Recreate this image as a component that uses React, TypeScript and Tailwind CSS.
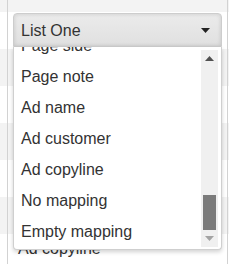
import React from 'react'

const items = ['Page side', 'Page note', 'Ad name', 'Ad customer', 'Ad copyline', 'No mapping', 'Empty mapping']

// background table rows: [height, striped, text]
const rows: [string, boolean, string][] = [
  ['h-[12px]', true, ''],
  ['h-[37px]', false, ''],
  ['h-[37px]', true, ''],
  ['h-[37px]', false, ''],
  ['h-[37px]', true, ''],
  ['h-[37px]', false, ''],
  ['h-[37px]', true, ''],
  ['h-[37px]', false, 'Ad copyline'],
]

function Tri({ up, color }: { up?: boolean; color: string }) {
  return (
    <svg width="9" height="5" viewBox="0 0 9 5">
      <polygon points={up ? '0,5 9,5 4.5,0' : '0,0 9,0 4.5,5'} fill={color} />
    </svg>
  )
}

export default function App() {
  return (
    <div className="relative w-[229px] h-[264px] overflow-hidden bg-white text-[#333] font-['Liberation_Sans',Arial,sans-serif]">

      {/* table behind */}
      <div className="flex flex-col">
        {rows.map(([h, striped, text], i) => (
          <div key={i} className={`flex ${h} ${striped ? 'bg-[#f3f3f3]' : 'bg-white'}`}>
            <div className="w-[7px] shrink-0" />
            <div className="flex-1 border-x border-[#d2d2d2] pl-[10px] pt-[6px] text-[16px] leading-[18px]">{text}</div>
            <div className="w-[1px] shrink-0" />
          </div>
        ))}
      </div>

      {/* open select */}
      <div className="absolute left-[13px] top-[13px] w-[209px]">
        <div className="flex h-[34px] items-center justify-between rounded-t-[4px] border border-[#cdcdcd] bg-gradient-to-b from-[#ebebeb] to-[#e0e0e0] pl-[7px] pr-[11px] pt-[1px] shadow-[inset_0_0_4px_rgba(0,0,0,0.14)]">
          <span className="text-[16px] leading-[18px]">List One</span>
          <Tri color="#222" />
        </div>

        <div className="flex h-[203px] rounded-b-[4px] border border-t-0 border-[#cfcfcf] bg-white shadow-[0_2px_4px_rgba(0,0,0,0.18)]">
          <div className="flex-1 overflow-hidden">
            <div className="-mt-[17px] flex flex-col">
              {items.map(it => (
                <div key={it} className="flex h-[31px] items-center pl-[7px] text-[16px] leading-[18px]">
                  {it}
                </div>
              ))}
            </div>
          </div>

          <div className="mt-[3px] mb-[2px] mr-[3px] flex w-[17px] flex-col bg-[#f0f0f0]">
            <div className="flex h-[17px] items-center justify-center">
              <Tri up color="#505050" />
            </div>
            <div className="flex flex-1 flex-col justify-end">
              <div className="mx-[2px] h-[35px] bg-[#7b7b7b]" />
            </div>
            <div className="flex h-[17px] items-center justify-center">
              <Tri color="#a3a3a3" />
            </div>
          </div>
        </div>
      </div>
    </div>
  )
}
